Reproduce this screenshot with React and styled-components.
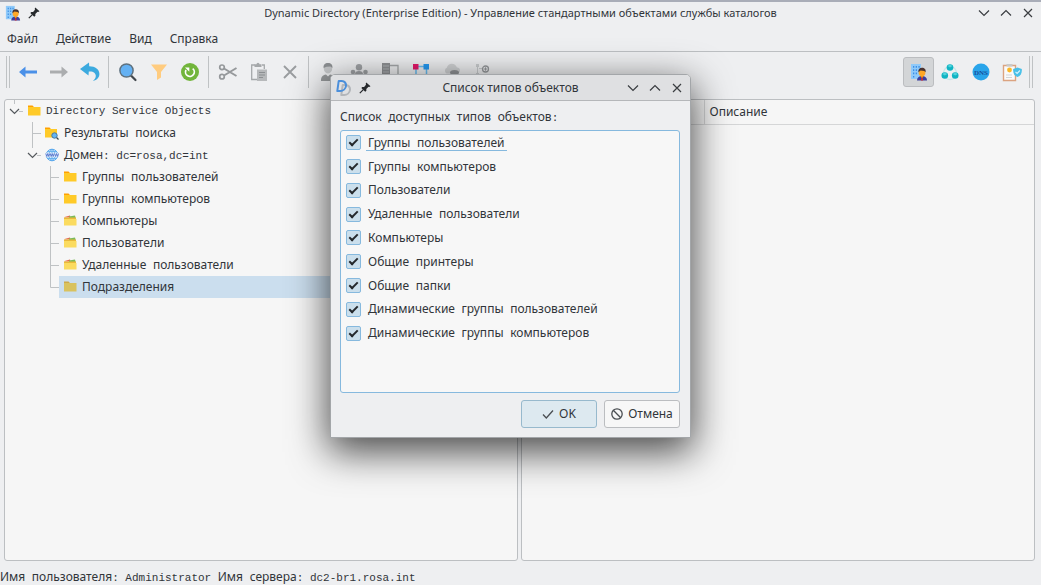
import React from 'react';

import styled, { createGlobalStyle, css } from 'styled-components';

const GlobalStyle = createGlobalStyle`
  * {
    box-sizing: border-box;
  }

  body {
    margin: 0;
    background: #eeeff1;
    color: #31353a;
    font: 12px/16px 'Noto Sans', sans-serif;
  }

  button,
  input {
    font: inherit;
    color: inherit;
  }
`;

const Window = styled.div`
  position: relative;

  display: flex;
  flex-direction: column;

  min-height: 100vh;
  border-top: 2px solid #a9adb8;
`;

const TitleBar = styled.header`
  display: grid;
  grid-template-columns: 1fr auto 1fr;
  align-items: center;

  height: ${({ $dialog }) => ($dialog ? 26 : 22)}px;
  padding: 0 5px;

  ${({ $dialog }) =>
    $dialog &&
    css`
      border-bottom: 1px solid #b5b7ba;
      border-radius: 4px 4px 0 0;
      background: #dfe0e2;
    `}
`;

const Title = styled.h1`
  margin: 0;
  font-size: ${({ $dialog }) => ($dialog ? 12 : 11)}px;
  font-weight: 400;
  white-space: nowrap;
`;

const TitleIcons = styled.div`
  display: flex;
  align-items: center;
  gap: 7px;
`;

const Logo = styled.span`
  display: grid;
  width: 16px;
  height: 18px;
  padding: 1px;

  &::before,
  &::after {
    content: '';
    box-sizing: border-box;
    grid-area: 1 / 1;
    width: 10px;
    height: 12px;
    border: 2px solid #b3b6ba;
    border-radius: 1px 6px 6px 1px;
    transform: skewX(-8deg);
  }

  &::before {
    place-self: end;
  }

  &::after {
    place-self: start;
    border-color: #4b8fdb;
  }
`;

const Controls = styled.div`
  display: flex;
  justify-content: flex-end;
  gap: 6px;
`;

const Control = styled.button`
  display: flex;
  justify-content: center;
  align-items: center;

  width: 16px;
  height: 16px;
  padding: 0;
  border: 0;
  background: none;
`;

const MenuBar = styled.nav`
  display: flex;
  align-items: center;
  gap: 18px;

  height: 28px;
  padding: 2px 7px 0;
  border-bottom: 1px solid #bcbfc2;
`;

const MenuItem = styled.button`
  padding: 0;
  border: 0;
  background: none;
`;

const Toolbar = styled.div`
  display: flex;
  align-items: center;

  height: 39px;
  padding: 0 6px 0 4px;
`;

const Handle = styled.span`
  width: 4px;
  height: 32px;
  margin: 0 2px;
  border: solid #bfc2c4;
  border-width: 0 1px;
`;

const Separator = styled.span`
  width: 1px;
  height: 32px;
  margin: 0 3px;
  background: #bfc2c4;
`;

const Tool = styled.button`
  display: flex;
  justify-content: center;
  align-items: center;

  width: 31px;
  height: 30px;
  padding: 0;
  border: 1px solid ${({ $active }) => ($active ? '#bbbdc0' : 'transparent')};
  border-radius: 3px;
  background: ${({ $active }) => ($active ? '#d3d5d7' : 'none')};
`;

const Spacer = styled.span`
  flex: 1;
`;

const Panes = styled.main`
  flex: 1;
  display: grid;
  grid-template-columns: 1fr 1fr;
  gap: 3px;

  padding: 8px 6px 0 4px;
`;

const Pane = styled.section`
  border: 1px solid #bcbfc2;
  border-radius: 3px;
  background: #f6f6f6;
`;

const Tree = styled.ul`
  margin: 0;
  padding: 0;
  list-style: none;
`;

const TreeRow = styled.li`
  display: flex;
  align-items: center;

  height: 22px;
  padding-left: ${({ $level }) => $level * 18}px;
`;

const TreeLabel = styled.span`
  flex: 1;
  display: flex;
  align-items: center;
  gap: 5px;

  height: 22px;
  padding-left: 4px;
  background: ${({ $selected }) => ($selected ? '#cbdeee' : 'none')};
`;

const Table = styled.table`
  width: 100%;
  border-collapse: collapse;

  td,
  th {
    height: 24px;
    padding: 0 5px;
    border-bottom: 1px solid #d5d6d7;
    font-weight: 400;
    text-align: left;
  }

  td {
    width: 182px;
    border-right: 1px solid #d5d6d7;
  }
`;

const StatusBar = styled.footer`
  height: 24px;
  padding-top: 8px;
`;

const Mixed = styled.span`
  font: 11px/16px 'Liberation Mono', monospace;
  white-space: nowrap;
`;

const Word = styled.span`
  font: 12px/16px 'Noto Sans', sans-serif;
`;

const Dialog = styled.div`
  position: absolute;
  z-index: 10;
  top: 72px;
  left: 330px;

  width: 361px;
  border: 1px solid #a3a6a9;
  border-radius: 5px 5px 0 0;
  background: #eeeff1;
  box-shadow: 0 12px 38px 2px rgba(0, 0, 0, 0.7);
`;

const DialogBody = styled.form`
  display: flex;
  flex-direction: column;
  gap: 4px;

  padding: 8px 10px 9px 9px;
`;

const CheckPanel = styled.div`
  height: 263px;
  padding: 0 5px;
  border: 1px solid #86b9de;
  border-radius: 3px;
  background: #f7f7f7;
`;

const CheckList = styled.div`
  display: grid;
  grid-auto-rows: 1fr;
  height: 214px;
`;

const CheckRow = styled.label`
  display: flex;
  align-items: center;
  gap: 5px;
`;

const CheckText = styled.span`
  display: flex;
  height: 16px;
  padding: 0 2px;
  border-bottom: 1px solid ${({ $focused }) => ($focused ? '#86b9de' : 'transparent')};
`;

const Check = styled.input`
  appearance: none;
  display: flex;
  justify-content: center;

  width: 15px;
  height: 15px;
  margin: 0;
  border: 1px solid #86b9de;
  border-radius: 2px;
  background: #cbdfec;

  &:checked::before {
    content: '';
    width: 3px;
    height: 7px;
    margin-top: 1px;
    border: solid #25292d;
    border-width: 0 2px 2px 0;
    transform: rotate(45deg);
  }
`;

const Actions = styled.div`
  display: flex;
  justify-content: flex-end;
  gap: 7px;
  padding-top: 3px;
`;

const DialogButton = styled.button`
  display: flex;
  justify-content: center;
  align-items: center;
  gap: 5px;

  width: 76px;
  height: 28px;
  padding: 0;
  border: 1px solid ${({ $primary }) => ($primary ? '#97b9cd' : '#bbbdc0')};
  border-radius: 3px;
  background: ${({ $primary }) => ($primary ? '#dde9f0' : '#f7f7f7')};
`;

const Icon = ({ size = 20, box = 20, children, ...props }) => (
  <svg width={size} height={size} viewBox={`0 0 ${box} ${box}`} fill="none" aria-hidden {...props}>
    {children}
  </svg>
);

const AppIcon = ({ size }) => (
  <Icon size={size} box={18}>
    <path d="M1 1h10v15H1z" fill="#90caf9" />
    <path
      d="M3 3h1.300v1.700H3zM5.700 3H7v1.700H5.700zM8.400 3h1.300v1.700H8.400zM3 6.300h1.300V8H3zM5.700 6.300H7V8H5.700zM3 9.600h1.300v1.700H3zM5.700 9.600H7v1.700H5.700zM3 12.900h1.300v1.700H3z"
      fill="#3d8fe6"
    />
    <path d="M7 17.500c0-3 2-4.500 5-4.500s5 1.500 5 4.500z" fill="#3a3f9e" />
    <path d="M10.300 13l1.700 2.400 1.700-2.400z" fill="#ff9800" />
    <path d="M11.500 14.500h1l.6 3h-2.200z" fill="#d32f2f" />
    <circle cx="12" cy="9.800" r="3.400" fill="#ffa726" />
    <path d="M8.400 9.300C8 6.300 9.500 4.800 12 4.800s4.200 1.500 3.600 4.500L14.200 8l-3.600-.6z" fill="#4a3330" />
  </Icon>
);

const PinIcon = () => (
  <Icon size={12} box={12}>
    <path
      d="M7.300.5l4.200 3.800-1.300.6-.7-.2-2.200 2.300.1 1.800-1.200 1L2.300 6l1-1.100 1.800.1L7 2.700l-.3-.9z"
      fill="#26292c"
    />
    <path d="M4.300 7.700L.8 11.200" stroke="#26292c" strokeWidth="1.200" />
  </Icon>
);

const WindowControls = () => (
  <Controls>
    {[
      ['Свернуть', 'M3 5.500l5 5 5-5'],
      ['Развернуть', 'M3 10.500l5-5 5 5'],
      ['Закрыть', 'M4 4l8 8M12 4l-8 8'],
    ].map(([label, path]) => (
      <Control key={label} type="button" aria-label={label}>
        <Icon size={16} box={16} stroke="#3a3d41" strokeWidth="1.200">
          <path d={path} />
        </Icon>
      </Control>
    ))}
  </Controls>
);

const BackIcon = () => (
  <Icon>
    <path d="M7.500 4.500v4H19v3H7.500v4L1 10z" fill="#4a90e8" />
  </Icon>
);

const ForwardIcon = () => (
  <Icon>
    <path d="M12.500 4.500v4H1v3h11.500v4L19 10z" fill="#abadaf" />
  </Icon>
);

const UndoIcon = () => (
  <Icon>
    <path
      d="M9 .5L0 7l8.500 6.500.3-4c4.600-.4 7 1.600 7 4.300 0 2-1 3.600-3 5.300 4.500-1 6.700-4 6.600-7.300C19.300 7.500 15.500 4.300 9.200 4.300z"
      fill="#3caadf"
    />
  </Icon>
);

const SearchIcon = () => (
  <Icon>
    <path d="M13 13.500l4.500 4.500" stroke="#42474c" strokeWidth="2.200" strokeLinecap="round" />
    <circle cx="8.500" cy="8.500" r="6.600" fill="#64b1f3" stroke="#5f7280" strokeWidth="1.500" />
  </Icon>
);

const FilterIcon = () => (
  <Icon>
    <path d="M2 2.500h16l-6 7.500v5.500l-4 2.500v-8z" fill="#ffcc80" />
  </Icon>
);

const RefreshIcon = () => (
  <Icon>
    <circle cx="10" cy="10" r="9" fill="#72b53c" />
    <path d="M12.700 6.600A4.400 4.400 0 1 1 6 8" stroke="#fff" strokeWidth="1.700" />
    <path d="M5 5.500h4.300v4.200z" fill="#fff" />
  </Icon>
);

const CutIcon = () => (
  <Icon stroke="#95989b" strokeWidth="1.700">
    <circle cx="4" cy="5.300" r="2.300" />
    <circle cx="4" cy="14.700" r="2.300" />
    <path d="M6 6.500L18.500 14M6 13.500L18.500 6" strokeWidth="2" />
  </Icon>
);

const PasteIcon = () => (
  <Icon>
    <path d="M6 3H2.700v14.500H8M13 3h2.300v4" stroke="#a5a8aa" strokeWidth="1.300" />
    <path d="M5.500 2.200h2a1.500 1.500 0 0 1 3 0h2V5h-7z" fill="#a5a8aa" />
    <path d="M8 7.500h10V19H8z" fill="#b7b9bb" />
    <path d="M10 10.500h6M10 13h6M10 15.500h4" stroke="#8c8f92" strokeWidth="1.100" />
  </Icon>
);

const DeleteIcon = () => (
  <Icon stroke="#9a9da0" strokeWidth="1.900">
    <path d="M4 4l12 12M16 4L4 16" />
  </Icon>
);

const UserIcon = () => (
  <Icon>
    <ellipse cx="10" cy="6.500" rx="4.200" ry="5" fill="#c6c8ca" />
    <path d="M5.600 6C5.200 2.500 7 1 10 1s4.800 1.500 4.400 5L12.500 4.500l-4 .3z" fill="#8d9093" />
    <path d="M3 19c0-4 1.500-6 5-6.500l2 2 2-2c3.500.5 5 2.500 5 6.500z" fill="#96999b" />
  </Icon>
);

const GroupIcon = () => (
  <Icon fill="#a0a3a6">
    <circle cx="10" cy="5.200" r="3.200" />
    <circle cx="4" cy="10" r="2.300" />
    <circle cx="16.500" cy="10" r="2.300" />
    <path d="M6 12c0-2 1.500-3 4-3s4 1 4 3zM1 15c0-2 1-3 3-3s3 1 3 3zM13.500 15c0-2 1-3 3-3s3 1 3 3z" />
  </Icon>
);

const ServersIcon = () => (
  <Icon>
    <path d="M2 1h8v17H2z" fill="#8e9194" />
    <path d="M3 4h6M3 7h6M3 10h6" stroke="#b3b6b8" />
    <path d="M10 3.500h8V12" stroke="#a5a8aa" strokeWidth="1.300" />
  </Icon>
);

const NetworkIcon = () => (
  <Icon>
    <path d="M5 4.500h11M5 4v14M15.500 4v14" stroke="#68bdf2" strokeWidth="1.500" />
    <path d="M2 2h5.500v5.500H2z" fill="#e5186a" />
    <path d="M12.500 2H18v5.500h-5.500z" fill="#2499f2" />
  </Icon>
);

const CloudIcon = () => (
  <Icon>
    <path
      d="M4.500 11.500a3.300 3.300 0 0 1 .3-5.800C5.500 3 7.500 1.700 9.800 1.700c2.500 0 4.400 1.500 5 3.600 4.200.5 4.200 5.500.8 6.200z"
      fill="#d0d2d4"
    />
    <ellipse cx="12.500" cy="10.500" rx="4.500" ry="2.500" fill="#909396" />
  </Icon>
);

const AddNodeIcon = () => (
  <Icon>
    <path d="M3 2h3v3H3zM3 11h3v3H3z" fill="#c9ccce" />
    <path d="M4.500 5v6M6 6.500h4" stroke="#c9ccce" />
    <circle cx="12.500" cy="7" r="3" stroke="#96999c" strokeWidth="1.300" />
    <path d="M12.500 5.300v3.400M10.800 7h3.400" stroke="#96999c" />
  </Icon>
);

const ClusterIcon = () => (
  <Icon>
    <circle cx="10" cy="11" r="6.500" stroke="#c3e7ea" strokeWidth="1.300" />
    <g fill="#10b4c3">
      <circle cx="10" cy="5.500" r="3.300" />
      <circle cx="4.800" cy="13.500" r="3.300" />
      <circle cx="15.200" cy="13.500" r="3.300" />
    </g>
    <path
      d="M10 2.500l2.500 1.500L10 5.500 7.500 4zM4.800 10.500L7.300 12l-2.500 1.500L2.300 12zM15.200 10.500l2.500 1.500-2.500 1.500-2.500-1.500z"
      fill="#52d3dc"
    />
  </Icon>
);

const DnsIcon = () => (
  <Icon>
    <circle cx="10" cy="10" r="8.500" fill="#29a4ea" />
    <text
      x="10"
      y="12.500"
      textAnchor="middle"
      fontFamily="'Liberation Serif', serif"
      fontSize="7"
      fontWeight="700"
      fill="#174f9c"
    >
      DNS
    </text>
  </Icon>
);

const PolicyIcon = () => (
  <Icon>
    <path d="M1.500 3.500h12v15h-12z" fill="#fafafa" stroke="#dba381" strokeWidth="1.400" />
    <path d="M4.500 2h6v2.500h-6z" fill="#c9c9c9" />
    <circle cx="7.500" cy="8" r="2.400" fill="#fbb829" />
    <path d="M4 13h6M4 15.500h6" stroke="#d2d5d7" />
    <path d="M15.500 5.500l4.300 1.600c.3 4-1 6.500-4.300 8-3.300-1.500-4.600-4-4.300-8z" fill="#48c0e8" />
    <path d="M13.500 9.800l1.600 1.600 2.800-2.900" stroke="#d5f3fc" strokeWidth="1.200" />
  </Icon>
);

const FolderIcon = ({ color = '#ffca28', tab = '#ffa000' }) => (
  <Icon size={14} box={14}>
    <path d="M1 1.500h4.500L7 3h6v5H1z" fill={tab} />
    <path d="M1 3h12.500v8.500H1z" fill={color} />
  </Icon>
);

const SearchFolderIcon = () => (
  <Icon size={14} box={14}>
    <path d="M0 1.500h4.500L6 3h6v4H0z" fill="#ffa000" />
    <path d="M0 3h12v8.500H0z" fill="#ffca28" />
    <path d="M11 11l2.500 2.500" stroke="#37474f" strokeWidth="1.300" />
    <circle cx="9.500" cy="9.500" r="2.700" fill="#64b5f6" stroke="#4a7ba0" />
  </Icon>
);

const FilesFolderIcon = () => (
  <Icon size={14} box={14}>
    <path d="M1.500 3L7 1.500l.4 2H1.500z" fill="#e5694b" />
    <path d="M6 2.500l6-1 .7 2.500H6z" fill="#7cba59" />
    <path d="M1 3.500h12v2H1z" fill="#e9b93a" />
    <path d="M1 5h12.500v6.500H1z" fill="#fbdb5f" />
  </Icon>
);

const GlobeIcon = () => (
  <Icon size={14} box={14}>
    <circle cx="7" cy="7" r="5.800" stroke="#5ca9ec" fill="#d3e9fb" />
    <path
      d="M7 1.200v11.600M2.500 3.500h9M2.500 10.500h9M7 1.200C2.800 4 2.800 10 7 12.800M7 1.200c4.200 2.800 4.200 8.800 0 11.600"
      stroke="#5ca9ec"
      strokeWidth=".8"
    />
    <path d="M0 5h14v4H0z" fill="#e1edfa" />
    <path
      d="M.8 5.500l1 3 1-3 1 3 1-3M5.200 5.500l1 3 1-3 1 3 1-3M9.600 5.500l1 3 1-3 1 3 1-3"
      stroke="#4668c8"
      strokeWidth=".8"
    />
  </Icon>
);

// Connector lines drawn in front of a tree row.
const branches = {
  root: 'M9.500 0v4M14 11.500h4',
  tee: 'M9.500 0v22M10 11.500h8',
  open: 'M9.500 0v4M14 11.500h4',
  end: 'M9.500 0v11.500h8.500',
};

const Branch = ({ type }) => (
  <svg width="18" height="22" fill="none" aria-hidden>
    <path d={branches[type]} stroke="#bfc2c4" />
    {(type === 'root' || type === 'open') && (
      <path d="M5 9l4.500 4.500L14 9" stroke="#55595d" strokeWidth="1.200" />
    )}
  </svg>
);

const nodes = [
  { level: 0, branch: 'root', icon: <FolderIcon />, text: 'Directory Service Objects' },
  { level: 1, branch: 'tee', icon: <SearchFolderIcon />, text: 'Результаты поиска' },
  { level: 1, branch: 'open', icon: <GlobeIcon />, text: 'Домен: dc=rosa,dc=int' },
  { level: 2, branch: 'tee', icon: <FolderIcon />, text: 'Группы пользователей' },
  { level: 2, branch: 'tee', icon: <FolderIcon />, text: 'Группы компьютеров' },
  { level: 2, branch: 'tee', icon: <FilesFolderIcon />, text: 'Компьютеры' },
  { level: 2, branch: 'tee', icon: <FilesFolderIcon />, text: 'Пользователи' },
  { level: 2, branch: 'tee', icon: <FilesFolderIcon />, text: 'Удаленные пользователи' },
  {
    level: 2,
    branch: 'end',
    icon: <FolderIcon color="#d9c25e" tab="#cda94a" />,
    text: 'Подразделения',
    selected: true,
  },
];

const objectTypes = [
  'Группы пользователей',
  'Группы компьютеров',
  'Пользователи',
  'Удаленные пользователи',
  'Компьютеры',
  'Общие принтеры',
  'Общие папки',
  'Динамические группы пользователей',
  'Динамические группы компьютеров',
];

const toolGroups = [
  [
    ['Назад', BackIcon],
    ['Вперёд', ForwardIcon],
    ['Отменить', UndoIcon],
  ],
  [
    ['Поиск', SearchIcon],
    ['Фильтр', FilterIcon],
    ['Обновить', RefreshIcon],
  ],
  [
    ['Вырезать', CutIcon],
    ['Вставить', PasteIcon],
    ['Удалить', DeleteIcon],
  ],
  [
    ['Пользователь', UserIcon],
    ['Группа', GroupIcon],
    ['Компьютер', ServersIcon],
    ['Сеть', NetworkIcon],
    ['Принтер', CloudIcon],
    ['Подразделение', AddNodeIcon],
  ],
];

// Cyrillic words use the interface font, everything between them is monospaced.
const Text = ({ children }) => (
  <Mixed>
    {children
      .split(/([А-Яа-я]+)/)
      .map((part, i) => (i % 2 ? <Word key={i}>{part}</Word> : part))}
  </Mixed>
);

const App = () => (
  <>
    <GlobalStyle />
    <Window>
      <TitleBar>
        <TitleIcons>
          <AppIcon size={16} />
          <PinIcon />
        </TitleIcons>
        <Title>
          Dynamic Directory (Enterprise Edition) - Управление стандартными объектами службы
          каталогов
        </Title>
        <WindowControls />
      </TitleBar>
      <MenuBar>
        {['Файл', 'Действие', 'Вид', 'Справка'].map((item) => (
          <MenuItem key={item}>{item}</MenuItem>
        ))}
      </MenuBar>
      <Toolbar>
        <Handle />
        {toolGroups.map((group, i) => (
          <React.Fragment key={i}>
            {i > 0 && <Separator />}
            {group.map(([label, ToolIcon]) => (
              <Tool key={label} aria-label={label}>
                <ToolIcon />
              </Tool>
            ))}
          </React.Fragment>
        ))}
        <Spacer />
        <Tool $active aria-label="Объекты">
          <AppIcon size={18} />
        </Tool>
        <Tool aria-label="Сайты">
          <ClusterIcon />
        </Tool>
        <Tool aria-label="Серверы имён">
          <DnsIcon />
        </Tool>
        <Tool aria-label="Политики">
          <PolicyIcon />
        </Tool>
        <Handle />
      </Toolbar>
      <Panes>
        <Pane>
          <Tree>
            {nodes.map(({ level, branch, icon, text, selected }) => (
              <TreeRow key={text} $level={level}>
                <Branch type={branch} />
                <TreeLabel $selected={selected}>
                  {icon}
                  <Text>{text}</Text>
                </TreeLabel>
              </TreeRow>
            ))}
          </Tree>
        </Pane>
        <Pane>
          <Table>
            <thead>
              <tr>
                <td />
                <th scope="col">Описание</th>
              </tr>
            </thead>
          </Table>
        </Pane>
      </Panes>
      <StatusBar>
        <Text>Имя пользователя: Administrator Имя сервера: dc2-br1.rosa.int</Text>
      </StatusBar>
      <Dialog role="dialog" aria-labelledby="types-title">
        <TitleBar $dialog>
          <TitleIcons>
            <Logo />
            <PinIcon />
          </TitleIcons>
          <Title as="h2" id="types-title" $dialog>
            Список типов объектов
          </Title>
          <WindowControls />
        </TitleBar>
        <DialogBody>
          <Text>Список доступных типов объектов:</Text>
          <CheckPanel>
            <CheckList>
              {objectTypes.map((type, i) => (
                <CheckRow key={type}>
                  <Check type="checkbox" defaultChecked />
                  <CheckText $focused={i === 0}>
                    <Text>{type}</Text>
                  </CheckText>
                </CheckRow>
              ))}
            </CheckList>
          </CheckPanel>
          <Actions>
            <DialogButton type="button" $primary>
              <Icon size={12} box={12} stroke="#4a4e52" strokeWidth="1.300">
                <path d="M1 6.500L4.300 10 11 2.500" />
              </Icon>
              OK
            </DialogButton>
            <DialogButton type="button">
              <Icon size={12} box={12} stroke="#4a4e52" strokeWidth="1.300">
                <circle cx="6" cy="6" r="5.200" />
                <path d="M2.300 2.300l7.400 7.400" />
              </Icon>
              Отмена
            </DialogButton>
          </Actions>
        </DialogBody>
      </Dialog>
    </Window>
  </>
);

export default App;
